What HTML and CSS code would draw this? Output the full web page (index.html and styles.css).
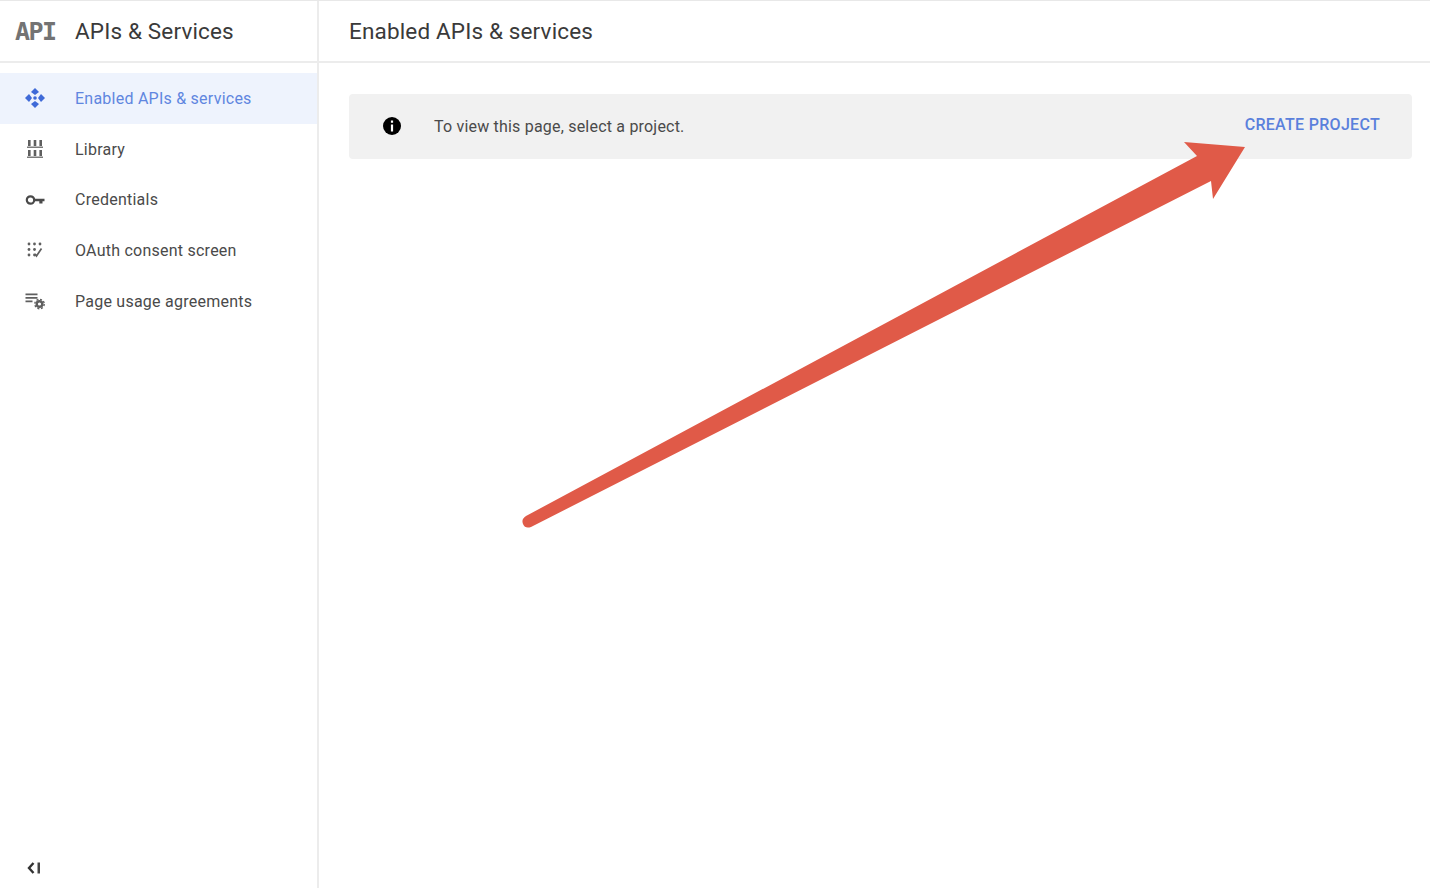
FILE: index.html
```html
<!DOCTYPE html>
<html lang="en">
<head>
  <meta charset="UTF-8" />
  <meta name="viewport" content="width=device-width, initial-scale=1.0" />
  <title>APIs &amp; Services</title>
  <link rel="stylesheet" href="styles.css">
</head>
<body>
  <div class="sidebar">
    <div class="side-header">
      <span class="api-logo">API</span>
      <h1>APIs &amp; Services</h1>
    </div>
    <nav class="side-nav">
      <a href="#" class="nav-item active">
        <svg class="nav-icon" viewBox="0 0 20 20">
          <path d="M10 0l4 4-4 3-4-3zM10 20l4-4-4-3-4 3zM0 10l4-4 3 4-3 4zM20 10l-4-4-3 4 3 4z" fill="#3f6ad8"/>
          <circle cx="10" cy="10" r="1.800" fill="#3f6ad8"/>
        </svg>
        <span>Enabled APIs &amp; services</span>
      </a>
      <a href="#" class="nav-item">
        <svg class="nav-icon" viewBox="0 0 20 20">
          <path d="M3 1h2.600v6H3zM8.700 1h2.600v6H8.700zM14.400 1H17v6h-2.600zM3 11h2.600v6H3zM8.700 11h2.600v6H8.700zM14.400 11H17v6h-2.600z" fill="#5f5f5f"/>
          <path d="M2 7.500h16v1.500H2zM2 17.500h16V19H2z" fill="#7a7a7a"/>
        </svg>
        <span>Library</span>
      </a>
      <a href="#" class="nav-item">
        <svg class="nav-icon" viewBox="0 0 20 20">
          <circle cx="5.500" cy="10" r="3.700" fill="none" stroke="#4a4a4a" stroke-width="2.200"/>
          <path d="M9 8.800h10.500v2.400h-2v2.300h-3.200v-2.300H9z" fill="#4a4a4a"/>
        </svg>
        <span>Credentials</span>
      </a>
      <a href="#" class="nav-item">
        <svg class="nav-icon" viewBox="0 0 20 20">
          <g fill="#5f5f5f">
            <circle cx="4" cy="4" r="1.400"/><circle cx="9.500" cy="4" r="1.400"/><circle cx="15" cy="4" r="1.400"/>
            <circle cx="4" cy="9.500" r="1.400"/><circle cx="9.500" cy="9.500" r="1.400"/>
            <circle cx="4" cy="15" r="1.400"/><circle cx="9.500" cy="15" r="1.400"/>
          </g>
          <path d="M10 14l1.500 2 5-7.500" fill="none" stroke="#5f5f5f" stroke-width="1.700"/>
        </svg>
        <span>OAuth consent screen</span>
      </a>
      <a href="#" class="nav-item">
        <svg class="nav-icon" viewBox="0 0 20 20">
          <path d="M0.500 2.500h12v1.700h-12zM0.500 6h12v1.700h-12zM0.500 9.500h7v1.700h-7z" fill="#5f5f5f"/>
          <circle cx="14.500" cy="13" r="2.800" fill="none" stroke="#5f5f5f" stroke-width="2.400"/>
          <circle cx="14.500" cy="13" r="4.700" fill="none" stroke="#5f5f5f" stroke-width="1.400" stroke-dasharray="2 1.690"/>
        </svg>
        <span>Page usage agreements</span>
      </a>
    </nav>
    <div class="side-footer">
      <svg class="collapse-icon" viewBox="0 0 14 12">
        <path d="M6.500 1L2 6l4.500 5" fill="none" stroke="#333" stroke-width="2.400"/>
        <path d="M10.500 0.500h2.500v11h-2.500z" fill="#444"/>
      </svg>
    </div>
  </div>

  <div class="main-content">
    <div class="page-header">
      <h2>Enabled APIs &amp; services</h2>
    </div>
    <div class="notice">
      <svg class="info-icon" viewBox="0 0 18 18">
        <circle cx="9" cy="9" r="9" fill="#000"/>
        <path d="M7.900 3.600h2.200v2.200H7.900zM7.900 7.500h2.200v6.900H7.900z" fill="#fff"/>
      </svg>
      <span class="notice-text">To view this page, select a project.</span>
      <a href="#" class="notice-action">CREATE PROJECT</a>
    </div>
  </div>

  <!-- red arrow drawn over the page -->
  <svg class="arrow" viewBox="0 0 1430 888">
    <path d="M1184 142L1245 147L1213 199L1211 181L531 527Q525 529 523 524Q521 519 526 516L1197 156Z" fill="#e05a48"/>
  </svg>
</body>
</html>
```

FILE: styles.css
```css
body {
  font-family: Roboto, "Liberation Sans", sans-serif;
  margin: 0;
  height: 888px;
  display: flex;
  overflow: hidden;
  background-color: #fff;
  color: #3c3c3c;
  border-top: 1px solid #e8e8e8;
  box-sizing: border-box;
}
a {
  text-decoration: none;
}
.sidebar {
  width: 319px;
  flex-shrink: 0;
  box-sizing: border-box;
  border-right: 2px solid #ececec;
  display: flex;
  flex-direction: column;
}
.side-header {
  height: 62px;
  box-sizing: border-box;
  border-bottom: 2px solid #ececec;
  display: flex;
  align-items: center;
  padding-left: 15px;
}
.api-logo {
  width: 60px;
  font-family: "DejaVu Sans Mono", monospace;
  font-weight: bold;
  font-size: 25px;
  letter-spacing: -1.600px;
  color: #737373;
}
h1, h2 {
  margin: 0;
  font-size: 22.500px;
  font-weight: 400;
  letter-spacing: 0.150px;
  color: #3a3a3a;
}
.side-nav {
  margin-top: 10px;
}
.nav-item {
  height: 50.700px;
  display: flex;
  align-items: center;
  padding-left: 25px;
  font-size: 16px;
  letter-spacing: 0.240px;
  color: #4a4a4a;
}
.nav-item.active {
  background-color: #eef3fd;
  color: #5f86e0;
}
.nav-icon {
  width: 20px;
  height: 20px;
  margin-right: 30px;
}
.side-footer {
  margin-top: auto;
  height: 29px;
  padding-left: 27px;
}
.collapse-icon {
  width: 14px;
  height: 12px;
  margin-top: 1px;
}
.main-content {
  flex: 1;
}
.page-header {
  height: 62px;
  box-sizing: border-box;
  border-bottom: 2px solid #ececec;
  display: flex;
  align-items: center;
  padding-left: 30px;
}
.notice {
  margin: 31px 18px 0 30px;
  height: 65px;
  box-sizing: border-box;
  background-color: #f1f1f1;
  border-radius: 4px;
  display: flex;
  align-items: center;
  padding: 0 32px 0 34px;
}
.info-icon {
  width: 18px;
  height: 18px;
  margin-right: 33px;
  margin-bottom: 1px;
}
.notice-text {
  font-size: 16px;
  letter-spacing: 0.200px;
  color: #4a4a4a;
  margin-bottom: 1px;
}
.notice-action {
  margin-left: auto;
  margin-bottom: 4px;
  font-size: 16px;
  font-weight: 500;
  letter-spacing: 0.300px;
  color: #5a80dc;
}
.arrow {
  position: absolute;
  top: 0;
  left: 0;
  width: 1430px;
  height: 888px;
  pointer-events: none;
}
```
